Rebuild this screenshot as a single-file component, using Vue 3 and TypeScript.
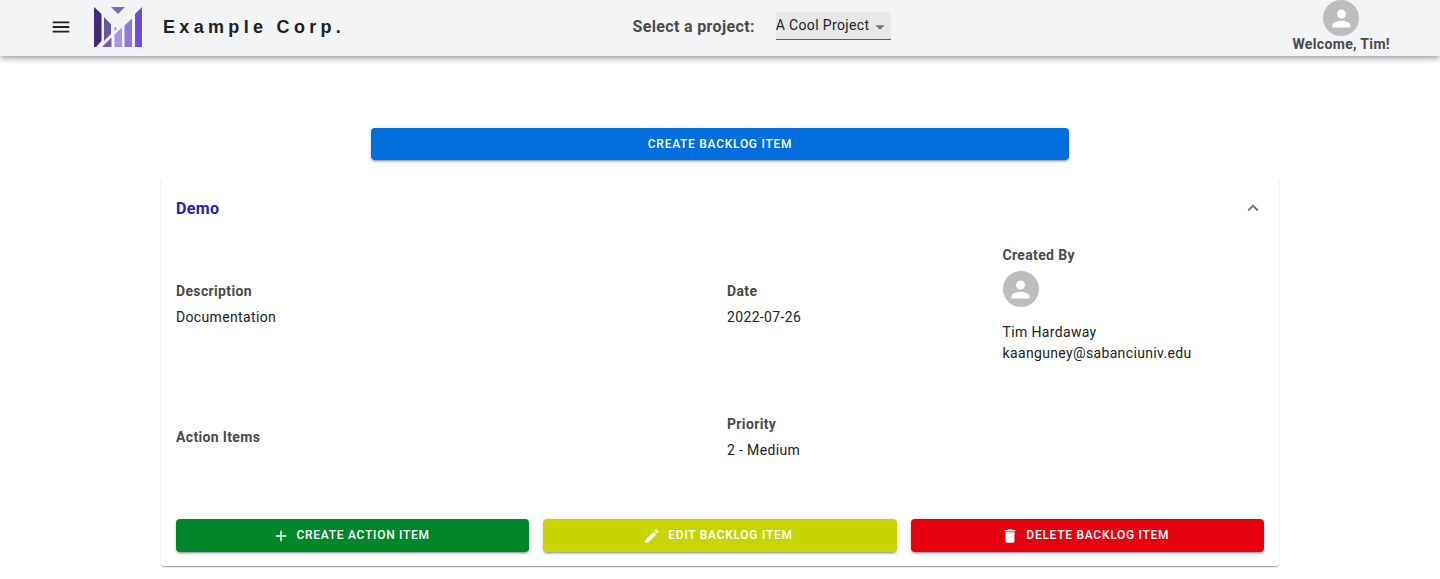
<script setup lang="ts">
import { ref } from 'vue'

interface BacklogItem {
  title: string
  description: string
  date: string
  priority: string
  author: { name: string; email: string }
}

const projects: string[] = ['A Cool Project']
const project = ref<string>(projects[0])
const expanded = ref<boolean>(true)

const item: BacklogItem = {
  title: 'Demo',
  description: 'Documentation',
  date: '2022-07-26',
  priority: '2 - Medium',
  author: { name: 'Tim Hardaway', email: 'kaanguney@sabanciuniv.edu' },
}

const personPath =
  'M12 12c2.21 0 4-1.79 4-4s-1.79-4-4-4-4 1.79-4 4 1.79 4 4 4zm0 2c-2.67 0-8 1.34-8 4v2h16v-2c0-2.66-5.33-4-8-4z'

const actions = [
  { label: 'Create Action Item', tone: 'green', path: 'M19 13h-6v6h-2v-6H5v-2h6V5h2v6h6v2z' },
  {
    label: 'Edit Backlog Item',
    tone: 'lime',
    path: 'M3 17.25V21h3.75L17.81 9.94l-3.75-3.75L3 17.25zM20.71 7.04c.39-.39.39-1.02 0-1.41l-2.34-2.34a.9959.9959 0 0 0-1.41 0l-1.83 1.83 3.75 3.75 1.83-1.83z',
  },
  {
    label: 'Delete Backlog Item',
    tone: 'red',
    path: 'M6 19c0 1.1.9 2 2 2h8c1.1 0 2-.9 2-2V7H6v12zM19 4h-3.5l-1-1h-5l-1 1H5v2h14V4z',
  },
]
</script>

<template>
  <div class="page">
    <header class="bar">
      <div class="brand">
        <button class="menu" type="button" aria-label="Open menu">
          <svg viewBox="0 0 24 24"><path d="M3 18h18v-2H3v2zm0-5h18v-2H3v2zm0-7v2h18V6H3z" /></svg>
        </button>
        <svg class="logo" viewBox="0 0 48 40" aria-hidden="true">
          <path fill="#432874" d="M0 0l7.5 7v27L2 40H0z" />
          <path fill="#69559a" d="M10 10l7 7.5v9.5l-7 7z" />
          <path fill="#7460a8" d="M17.5 30.5V40H8z" />
          <path fill="#8068b4" d="M17 0h14l-7 7z" />
          <path fill="#9b8bd0" d="M20.5 19.5l2.5 2-2.5 2.5z" />
          <path fill="#a396e8" d="M20.5 27.5l7.5-7V40h-7.5z" />
          <path fill="#8a78de" d="M30.5 18.5l7.5-7V40h-7.5z" />
          <path fill="#6f4fd6" d="M41 7l7-7v40h-7z" />
        </svg>
        <span class="name">Example Corp.</span>
      </div>
      <div class="picker">
        <label for="project">Select a project:</label>
        <div class="select">
          <select id="project" v-model="project">
            <option v-for="p in projects" :key="p" :value="p">{{ p }}</option>
          </select>
          <svg viewBox="0 0 24 24" aria-hidden="true"><path d="M7 10l5 5 5-5z" /></svg>
        </div>
      </div>
      <div class="user">
        <div class="who">
          <span class="avatar"><svg viewBox="0 0 24 24"><path :d="personPath" /></svg></span>
          <span class="welcome">Welcome, Tim!</span>
        </div>
      </div>
    </header>

    <main class="content">
      <button class="btn create" type="button">Create Backlog Item</button>

      <section class="card">
        <button class="summary" type="button" :aria-expanded="expanded" @click="expanded = !expanded">
          <span>{{ item.title }}</span>
          <svg viewBox="0 0 24 24" :class="{ closed: !expanded }">
            <path d="M12 8l-6 6 1.41 1.41L12 10.83l4.59 4.58L18 14z" />
          </svg>
        </button>
        <div v-if="expanded" class="details">
          <div class="info">
            <div class="field wide">
              <h3>Description</h3>
              <p>{{ item.description }}</p>
            </div>
            <div class="field">
              <h3>Date</h3>
              <p>{{ item.date }}</p>
            </div>
            <div class="field">
              <h3>Created By</h3>
              <span class="avatar"><svg viewBox="0 0 24 24"><path :d="personPath" /></svg></span>
              <p class="author">{{ item.author.name }}<br />{{ item.author.email }}</p>
            </div>
            <div class="field wide"><h3>Action Items</h3></div>
            <div class="field">
              <h3>Priority</h3>
              <p>{{ item.priority }}</p>
            </div>
          </div>
          <div class="actions">
            <button v-for="a in actions" :key="a.label" type="button" class="btn" :class="a.tone">
              <svg viewBox="0 0 24 24" aria-hidden="true"><path :d="a.path" /></svg>
              {{ a.label }}
            </button>
          </div>
        </div>
      </section>
    </main>
  </div>
</template>

<style>
body {
  margin: 0;
  background: #fff;
}
</style>

<style scoped>
.page {
  font-family: Roboto, 'Liberation Sans', sans-serif;
  font-size: 14px;
  line-height: 21px;
  letter-spacing: 0.025em;
  color: #212121;
}
button,
select {
  font: inherit;
  letter-spacing: inherit;
  color: inherit;
  border: 0;
  padding: 0;
  margin: 0;
  cursor: pointer;
}
svg {
  display: block;
  fill: currentColor;
}
h3,
p {
  margin: 0;
  font-size: inherit;
}
.bar {
  display: grid;
  grid-template-columns: 7fr auto 6fr;
  height: 56px;
  padding: 0 50px;
  background: #f3f4f6;
  box-shadow: 0 2px 4px -1px rgba(0, 0, 0, 0.2), 0 4px 5px rgba(0, 0, 0, 0.14), 0 1px 10px rgba(0, 0, 0, 0.12);
}
.brand {
  display: flex;
  align-items: center;
  padding-bottom: 2px;
}
.menu {
  background: none;
}
.menu svg {
  width: 22px;
  height: 22px;
}
.logo {
  width: 48px;
  height: 40px;
  margin: 0 21px 0 22px;
}
.name {
  font-family: 'Liberation Sans', Arial, sans-serif;
  font-size: 18px;
  font-weight: 700;
  letter-spacing: 0.24em;
}
.picker {
  display: flex;
  align-items: center;
  gap: 21px;
  padding-bottom: 4px;
}
.picker label {
  font-size: 16px;
  font-weight: 700;
  color: #4a4a4c;
}
.select {
  position: relative;
  border-bottom: 1px solid #0b6bcb;
  background: #e7e8ea;
}
.select select {
  display: block;
  appearance: none;
  height: 27px;
  padding-right: 21px;
  background: none;
  outline: 0;
}
.select svg {
  position: absolute;
  right: 0;
  top: 4px;
  width: 22px;
  height: 22px;
  color: #757575;
  pointer-events: none;
}
.user {
  display: flex;
  justify-content: flex-end;
}
.who {
  display: flex;
  flex-direction: column;
  align-items: center;
}
.welcome {
  font-weight: 700;
  line-height: 17px;
  color: #4a4a4c;
}
.avatar {
  display: flex;
  align-items: center;
  justify-content: center;
  width: 36px;
  height: 36px;
  border-radius: 50%;
  background: #bdbdbd;
  color: #fff;
}
.avatar svg {
  width: 27px;
  height: 27px;
}
.content {
  display: flex;
  flex-direction: column;
  align-items: center;
  gap: 18px;
  margin: 0 161px;
  padding: 72px 0 13px;
}
.btn {
  display: flex;
  align-items: center;
  justify-content: center;
  gap: 7px;
  height: 33px;
  border-radius: 4px;
  font-size: 12px;
  font-weight: 500;
  letter-spacing: 0.06em;
  text-transform: uppercase;
  color: #fff;
  box-shadow: 0 3px 1px -2px rgba(0, 0, 0, 0.2), 0 2px 2px rgba(0, 0, 0, 0.14), 0 1px 5px rgba(0, 0, 0, 0.12);
}
.btn svg {
  width: 18px;
  height: 18px;
  margin-left: -4px;
}
.create {
  width: 62.5%;
  height: 32px;
  background: #006edc;
}
.green {
  background: #00872b;
}
.lime {
  background: #c8d400;
}
.red {
  background: #e4000f;
}
.card {
  width: 100%;
  border-radius: 4px;
  background: #fff;
  box-shadow: 0 2px 1px -1px rgba(0, 0, 0, 0.2), 0 1px 1px rgba(0, 0, 0, 0.14), 0 1px 3px rgba(0, 0, 0, 0.12);
}
.summary {
  display: flex;
  align-items: center;
  justify-content: space-between;
  width: 100%;
  height: 60px;
  padding: 0 15px;
  background: none;
  font-size: 16px;
  font-weight: 700;
  color: #2323b4;
}
.summary svg {
  width: 22px;
  height: 22px;
  color: #757575;
}
.summary .closed {
  transform: rotate(180deg);
}
.details {
  padding: 7px 15px 14px;
}
.info {
  display: grid;
  grid-template-columns: repeat(4, 1fr);
  align-items: center;
  gap: 50px 14px;
}
.wide {
  grid-column: span 2;
}
.field {
  display: flex;
  flex-direction: column;
  gap: 5px;
}
.field h3 {
  font-weight: 700;
  color: #4a4a4c;
}
.author {
  padding-top: 10px;
}
.actions {
  display: grid;
  grid-template-columns: repeat(3, 1fr);
  gap: 14px;
  margin-top: 58px;
}
</style>
